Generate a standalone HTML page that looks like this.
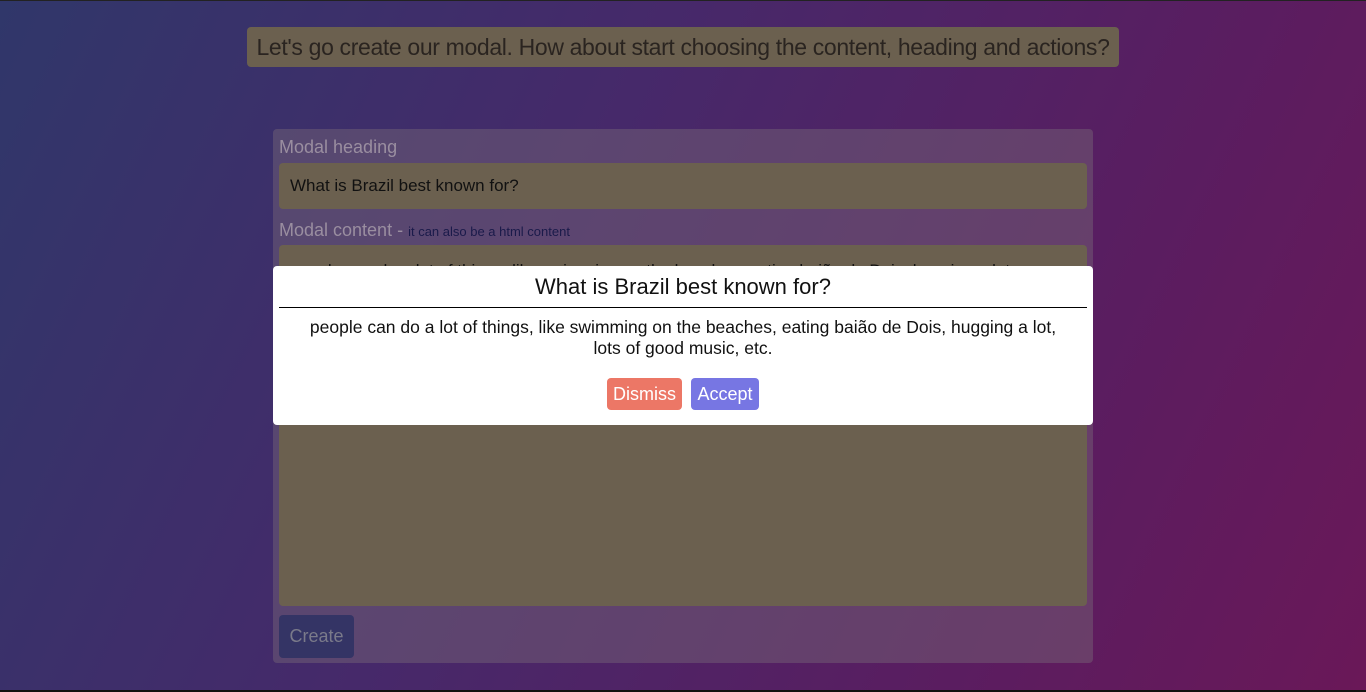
<!DOCTYPE html>
<html><head><meta charset="utf-8"><style>
html,body{margin:0;padding:0;width:1366px;height:692px;overflow:hidden}
body{background:linear-gradient(115deg,#30376a 0%,#46296a 40%,#5a1d60 75%,#6a1858 100%);font-family:"Liberation Sans",sans-serif;position:relative;border-bottom:2px solid #111;box-sizing:border-box;border-top:1px solid #222}
.top{position:absolute;left:247px;top:26px;width:872px;height:40px;background:#6b604f;border-radius:4px;color:#2a2420;font-size:23px;line-height:40px;text-align:center;white-space:nowrap;letter-spacing:-0.35px}
.panel{position:absolute;left:273px;top:128px;width:820px;height:534px;background:rgba(120,105,120,.45);border-radius:4px}
.lbl{position:absolute;left:6px;color:#9a8ea0;font-size:18px}
.lbl small{font-size:13px;color:#1a1a4a}
.inp{position:absolute;left:6px;width:808px;background:#6b604f;border-radius:4px;color:#111}
.btn{position:absolute;left:6px;top:486px;width:75px;height:43px;background:#343465;border-radius:4px;color:#7a7a8a;font-size:18px;line-height:43px;text-align:center}
.modal{position:absolute;left:273px;top:265px;width:820px;height:159px;background:#fff;border-radius:4px}
.modal h2{margin:0;font-weight:normal;font-size:22px;text-align:center;line-height:41px;color:#111;border-bottom:1px solid #000;margin:0 6px}
.modal p{margin:9px 0 0;text-align:center;font-size:17.5px;line-height:21px;color:#111}
.b{position:absolute;top:112px;height:32px;border-radius:4px;color:#fff;font-size:18px;line-height:32px;text-align:center}
</style></head><body>
<div class="top">Let's go create our modal. How about start choosing the content, heading and actions?</div>
<div class="panel">
<div class="lbl" style="top:8px">Modal heading</div>
<div class="inp" style="top:34px;height:46px;line-height:46px;font-size:17px;padding-left:11px;box-sizing:border-box">What is Brazil best known for?</div>
<div class="lbl" style="top:91px">Modal content - <small>it can also be a html content</small></div>
<div class="inp" style="top:116px;height:361px;overflow:hidden;font-size:17px;padding:16px 11px;box-sizing:border-box;white-space:nowrap">people can do a lot of things, like swimming on the beaches, eating baião de Dois, hugging a lot,</div>
<div class="btn">Create</div>
</div>
<div class="modal">
<h2>What is Brazil best known for?</h2>
<p>people can do a lot of things, like swimming on the beaches, eating baião de Dois, hugging a lot,<br>lots of good music, etc.</p>
<div class="b" style="left:334px;width:75px;background:#ec7766">Dismiss</div>
<div class="b" style="left:418px;width:68px;background:#7776e3">Accept</div>
</div>
</body></html>
